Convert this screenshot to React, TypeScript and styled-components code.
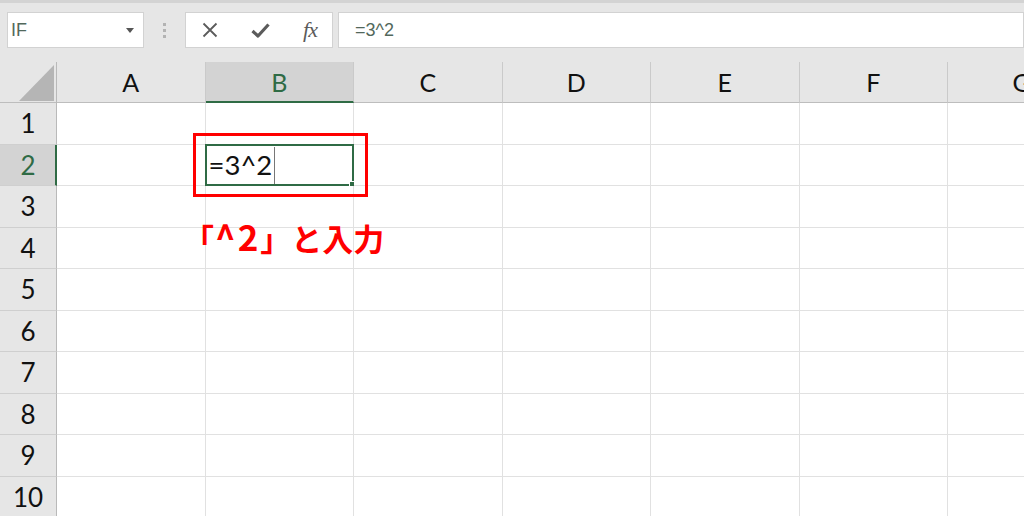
import styled, { createGlobalStyle } from "styled-components";

const GREEN = "#2f6b45";
const COLS = ["A", "B", "C", "D", "E", "F", "G"];
const ROWS = [1, 2, 3, 4, 5, 6, 7, 8, 9, 10];

const GlobalStyle = createGlobalStyle`
  html, body {
    margin: 0;
    padding: 0;
    background: #ffffff;
  }
  body {
    font-family: Lato, "Noto Sans", sans-serif;
  }
`;

const Page = styled.div`
  width: 1024px;
  height: 516px;
  overflow: hidden;
  display: flex;
  flex-direction: column;
  background: #ffffff;
`;

const FormulaBar = styled.div`
  height: 62px;
  flex: none;
  box-sizing: border-box;
  background: #e6e6e6;
  border-top: 3px solid #d3d3d3;
  padding: 9px 0 0 7px;
  display: flex;
  align-items: flex-start;
`;

const Field = styled.div<{ $width?: number }>`
  box-sizing: border-box;
  height: 36px;
  background: #ffffff;
  border: 1px solid #d2d2d2;
  display: flex;
  align-items: center;
  ${({ $width }) => ($width ? `width: ${$width}px; flex: none;` : "flex: 1;")}
`;

const FieldText = styled.span<{ $pad: number }>`
  padding-left: ${({ $pad }) => $pad}px;
  font-family: "Liberation Sans", Arial, sans-serif;
  font-size: 18px;
  color: #52685b;
  flex: 1;
`;

const DropArrow = styled.span`
  width: 0;
  height: 0;
  margin-right: 9px;
  border-left: 4px solid transparent;
  border-right: 4px solid transparent;
  border-top: 5px solid #555555;
`;

const Grip = styled.div`
  width: 41px;
  height: 36px;
  flex: none;
  display: flex;
  flex-direction: column;
  align-items: center;
  justify-content: center;
  gap: 3px;
  span {
    width: 3px;
    height: 3px;
    background: #b3b3b3;
  }
`;

const FuncButtons = styled(Field)`
  margin-right: 5px;
  gap: 20px;
  padding-left: 9px;
`;

const FuncButton = styled.span`
  width: 30px;
  display: flex;
  align-items: center;
  justify-content: center;
  color: #5b5b5b;
`;

const Fx = styled.span`
  font-family: "Liberation Serif", "Times New Roman", serif;
  font-style: italic;
  font-size: 22px;
  color: #5b5b5b;
  letter-spacing: -1px;
`;

const Sheet = styled.div`
  position: relative;
  flex: 1;
  display: grid;
  grid-template-columns: 57px repeat(7, 148.5px);
  grid-template-rows: 41px repeat(10, 41.5px);
  background: #ffffff;
`;

const Corner = styled.div`
  background: #e6e6e6;
  border-right: 1px solid #b9b9b9;
  border-bottom: 1px solid #bdbdbd;
  display: flex;
  align-items: flex-end;
  justify-content: flex-end;
  padding: 0 2px 1px 0;
  box-sizing: border-box;
`;

const CornerTriangle = styled.div`
  width: 35px;
  height: 36px;
  background: #b5b5b5;
  clip-path: polygon(100% 0, 100% 100%, 0 100%);
`;

const ColHead = styled.div<{ $active?: boolean }>`
  box-sizing: border-box;
  background: ${({ $active }) => ($active ? "#d3d3d3" : "#e6e6e6")};
  border-right: 1px solid #cacaca;
  border-bottom: ${({ $active }) =>
    $active ? `2px solid ${GREEN}` : "1px solid #bdbdbd"};
  display: flex;
  align-items: center;
  justify-content: center;
  font-size: 25px;
  color: ${({ $active }) => ($active ? GREEN : "#111111")};
  padding-top: ${({ $active }) => ($active ? "1px" : "0")};
`;

const RowHead = styled.div<{ $active?: boolean }>`
  box-sizing: border-box;
  background: ${({ $active }) => ($active ? "#d3d3d3" : "#e6e6e6")};
  border-right: ${({ $active }) =>
    $active ? `2px solid ${GREEN}` : "1px solid #b9b9b9"};
  border-bottom: 1px solid #cfcfcf;
  display: flex;
  align-items: center;
  justify-content: center;
  font-size: 26px;
  color: ${({ $active }) => ($active ? GREEN : "#111111")};
  padding-left: ${({ $active }) => ($active ? "1px" : "0")};
`;

const Cell = styled.div`
  position: relative;
  box-sizing: border-box;
  border-right: 1px solid #e1e1e1;
  border-bottom: 1px solid #e1e1e1;
  display: flex;
  align-items: center;
`;

const ActiveFrame = styled.div`
  position: absolute;
  inset: -1px -1px -1px -1px;
  border: 2px solid ${GREEN};
  pointer-events: none;
  &::after {
    content: "";
    position: absolute;
    right: -3px;
    bottom: -3px;
    width: 4px;
    height: 4px;
    background: ${GREEN};
    border: 1px solid #ffffff;
  }
`;

const CellText = styled.span`
  padding-left: 3px;
  font-size: 27.5px;
  color: #111111;
`;

const Caret = styled.span`
  width: 1px;
  align-self: stretch;
  margin: 2px 0 1px 2px;
  background: #777777;
`;

const Highlight = styled.div`
  position: absolute;
  left: 193px;
  top: 71px;
  width: 175px;
  height: 64px;
  box-sizing: border-box;
  border: 3px solid #ff0000;
  pointer-events: none;
`;

const Note = styled.div`
  position: absolute;
  left: 183px;
  top: 156px;
  font-family: "Noto Sans CJK JP", sans-serif;
  font-weight: 700;
  font-size: 31px;
  line-height: 1;
  color: #ff0000;
  white-space: nowrap;
`;

const NoteHalf = styled.span`
  font-size: 35px;
  letter-spacing: 2px;
  margin-left: 1px;
`;

export default function App() {
  return (
    <>
      <GlobalStyle />
      <Page>
        <FormulaBar>
          <Field $width={137}>
            <FieldText $pad={3}>IF</FieldText>
            <DropArrow />
          </Field>
          <Grip>
            <span />
            <span />
            <span />
          </Grip>
          <FuncButtons $width={148}>
            <FuncButton>
              <svg width="16" height="16" viewBox="0 0 16 16">
                <path
                  d="M1.5 1.5 L14.5 14.5 M14.5 1.5 L1.5 14.5"
                  stroke="#5b5b5b"
                  strokeWidth="1.8"
                  fill="none"
                />
              </svg>
            </FuncButton>
            <FuncButton>
              <svg width="19" height="15" viewBox="0 0 19 15">
                <path
                  d="M1.5 8 L7 13 L17.5 1.5"
                  stroke="#5b5b5b"
                  strokeWidth="3.2"
                  fill="none"
                  strokeLinejoin="round"
                />
              </svg>
            </FuncButton>
            <FuncButton>
              <Fx>fx</Fx>
            </FuncButton>
          </FuncButtons>
          <Field>
            <FieldText $pad={16}>=3^2</FieldText>
          </Field>
        </FormulaBar>

        <Sheet>
          <Corner>
            <CornerTriangle />
          </Corner>
          {COLS.map((c) => (
            <ColHead key={c} $active={c === "B"}>
              {c}
            </ColHead>
          ))}
          {ROWS.map((r) => (
            <RowGroup key={r} row={r} />
          ))}
          <Highlight />
          <Note>
            「<NoteHalf>^2</NoteHalf>」と入力
          </Note>
        </Sheet>
      </Page>
    </>
  );
}

function RowGroup({ row }: { row: number }) {
  return (
    <>
      <RowHead $active={row === 2}>{row}</RowHead>
      {COLS.map((c) =>
        row === 2 && c === "B" ? (
          <Cell key={c}>
            <CellText>=3^2</CellText>
            <Caret />
            <ActiveFrame />
          </Cell>
        ) : (
          <Cell key={c} />
        )
      )}
    </>
  );
}
